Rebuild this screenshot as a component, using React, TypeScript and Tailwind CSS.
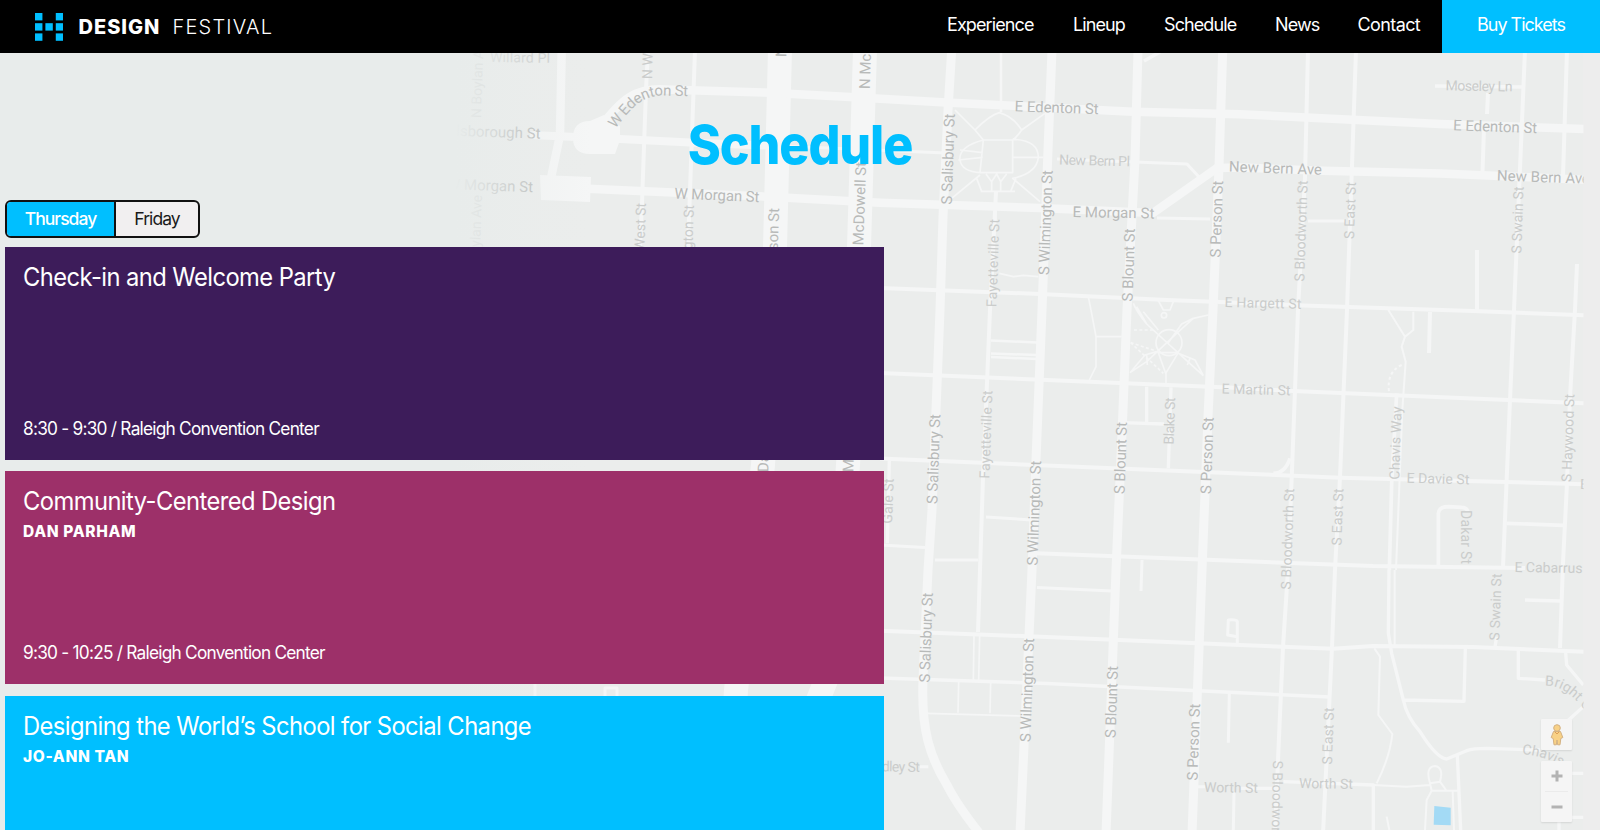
import React from "react";

const ROAD = "#f5f6f6";
const MAJOR = "#b8bab9";
const MINOR = "#cacccb";

type LabelProps = {
  t: string;
  x: number;
  y: number;
  len?: number;
  r?: number;
  minor?: boolean;
  anchor?: "start" | "middle" | "end";
};

function Label({ t, x, y, len, r = -88, minor, anchor = "middle" }: LabelProps) {
  return (
    <text
      transform={`translate(${x} ${y}) rotate(${r})`}
      dy="0.35em"
      textAnchor={anchor}
      textLength={len}
      fontSize={minor ? 14 : 15}
      fill={minor ? MINOR : MAJOR}
    >
      {t}
    </text>
  );
}

const labels: LabelProps[] = [
  { t: "E Edenton St", x: 1056.7, y: 107.5, len: 84, r: 2 },
  { t: "E Edenton St", x: 1495.2, y: 126.5, len: 84, r: 2 },
  { t: "New Bern Ave", x: 1275.5, y: 168, len: 93, r: 2 },
  { t: "New Bern Ave", x: 1543.5, y: 177, len: 93, r: 2 },
  { t: "E Morgan St", x: 1113.5, y: 212.5, len: 82, r: 1 },
  { t: "W Morgan St", x: 717, y: 195, len: 85, r: 2.5 },
  { t: "Hillsborough St", x: 540.5, y: 133.5, r: 2, anchor: "end" },
  { t: "W Morgan St", x: 533, y: 187, r: 2, anchor: "end" },
  { t: "Willard Pl", x: 520, y: 57.5, len: 60, r: 1, minor: true },
  { t: "S Salisbury St", x: 948, y: 159, len: 91 },
  { t: "S Salisbury St", x: 933.5, y: 459, len: 90 },
  { t: "S Salisbury St", x: 926, y: 637.5, len: 90 },
  { t: "S Wilmington St", x: 1045.5, y: 222.5, len: 105 },
  { t: "S Wilmington St", x: 1034, y: 513, len: 105 },
  { t: "S Wilmington St", x: 1027, y: 690, len: 104 },
  { t: "S Blount St", x: 1128.5, y: 265, len: 73 },
  { t: "S Blount St", x: 1120.5, y: 458, len: 72 },
  { t: "S Blount St", x: 1111.5, y: 702, len: 72 },
  { t: "S Person St", x: 1216.5, y: 219, len: 77 },
  { t: "S Person St", x: 1207, y: 455.5, len: 77 },
  { t: "S Person St", x: 1193.5, y: 742, len: 77 },
  { t: "Fayetteville St", x: 993, y: 263, len: 88, minor: true },
  { t: "Fayetteville St", x: 986, y: 434.5, len: 88, minor: true },
  { t: "S Bloodworth St", x: 1301, y: 231, len: 101, minor: true },
  { t: "S Bloodworth St", x: 1287.5, y: 539, len: 101, minor: true },
  { t: "S Bloodworth St", x: 1277, y: 811, len: 101, r: 91, minor: true },
  { t: "S East St", x: 1350, y: 210.5, len: 57, minor: true },
  { t: "S East St", x: 1337.5, y: 517, len: 57, minor: true },
  { t: "S East St", x: 1328, y: 736, len: 57, minor: true },
  { t: "S Swain St", x: 1517.5, y: 220, len: 67, minor: true },
  { t: "S Swain St", x: 1495.5, y: 607, len: 67, minor: true },
  { t: "S Haywood St", x: 1568, y: 438, len: 88, minor: true },
  { t: "Chavis Way", x: 1395.5, y: 443, len: 73, minor: true },
  { t: "Dakar St", x: 1466, y: 537, len: 54, r: 90, minor: true },
  { t: "Gale St", x: 888, y: 501, len: 45, minor: true },
  { t: "Blake St", x: 1169.5, y: 421, len: 47, minor: true },
  { t: "E Hargett St", x: 1263, y: 303, len: 77, r: 1.5, minor: true },
  { t: "E Martin St", x: 1256, y: 389.5, len: 69, r: 1.5, minor: true },
  { t: "E Davie St", x: 1438, y: 478.7, len: 63, r: 1.5, minor: true },
  { t: "E Cabarrus St", x: 1514.5, y: 567, r: 1, minor: true, anchor: "start" },
  { t: "E", x: 1580, y: 484, r: 1, minor: true, anchor: "start" },
  { t: "New Bern Pl", x: 1094.5, y: 160.5, len: 71, r: 1.5, minor: true },
  { t: "Moseley Ln", x: 1479, y: 86, len: 67, r: 1, minor: true },
  { t: "Worth St", x: 1231, y: 787.5, len: 54, r: 1, minor: true },
  { t: "Worth St", x: 1326, y: 783.5, len: 54, r: 1, minor: true },
  { t: "Dudley St", x: 920, y: 767, len: 54, r: 1, minor: true, anchor: "end" },
  { t: "N West St", x: 647, y: 79, minor: true, anchor: "start" },
  { t: "N McDowell St", x: 864.5, y: 89, anchor: "start" },
  { t: "N Dawson St", x: 781, y: 57, anchor: "start" },
  { t: "S West St", x: 641, y: 203, minor: true, anchor: "end" },
  { t: "S Harrington St", x: 689, y: 205, minor: true, anchor: "end" },
  { t: "S Dawson St", x: 774, y: 208, anchor: "end" },
  { t: "S McDowell St", x: 861, y: 162, anchor: "end" },
  { t: "N Boylan Ave", x: 476, y: 118, minor: true, anchor: "start" },
  { t: "N Boylan Ave", x: 477, y: 195, minor: true, anchor: "end" },
  { t: "Dawson St", x: 763, y: 472, anchor: "start" },
  { t: "McDowell St", x: 848, y: 472, anchor: "start" },
];

function MapBackdrop() {
  return (
    <svg
      className="absolute inset-0 h-[830px] w-[1600px]"
      viewBox="0 0 1600 830"
      fontFamily="Roboto, sans-serif"
      aria-hidden="true"
    >
      <defs>
        <linearGradient id="fade" x1="455" x2="590" y1="0" y2="0" gradientUnits="userSpaceOnUse">
          <stop offset="0" stopColor="#e8eceb" />
          <stop offset="0.15" stopColor="#e8eceb" stopOpacity="0.8" />
          <stop offset="0.6" stopColor="#e8eceb" stopOpacity="0.25" />
          <stop offset="1" stopColor="#e8eceb" stopOpacity="0" />
        </linearGradient>
        <clipPath id="tiles">
          <rect x="455" y="50" width="1128.5" height="780" />
        </clipPath>
        <path id="edenton" d="M615 129 C631 109 641 95 665 95.500 L700 96.500" />
        <path id="bright" d="M1545 686 C1560 684 1573 696 1584 709" />
        <path id="chavis" d="M1522 754 C1535 755 1548 758 1564 768" />
      </defs>
      <rect width="1600" height="830" fill="#ebedec" />
      <rect x="1583" width="17" height="830" fill="#ededed" />
      <g clipPath="url(#tiles)" fill="none" stroke={ROAD} strokeLinejoin="round">
        {/* north-south avenues */}
        <g strokeWidth="24">
          <path d="M780 50 L775 247 L763 465 L736 690 L728 830" />
          <path d="M865 50 L859 247 L848 465 L834 660 L812 715" />
        </g>
        <g strokeWidth="9">
          <path d="M951.7 50 L948 110 L943 217 L940 310 L932 510 L928 570 L923 680 C921 730 930 757 947 785 Q957 805 980 834" />
          <path d="M1052 50 L1048 150 L1042 310 L1036 460 L1032 570 L1020 834" />
          <path d="M1138 50 L1135 160 L1127 310 L1122.7 417 L1116 570 L1106 834" />
          <path d="M1222.7 50 L1219 167 L1213 310 L1208 417 L1202 570 L1192 834" />
        </g>
        <g strokeWidth="4">
          <path d="M996 192 L990 310 L987 383 L983 477 L980 570 L978 632" />
          <path d="M1308 50 L1305 177 L1298 310 L1292 470 L1288 570 L1283 647 L1278 760 L1275 834" />
          <path d="M1356 50 L1347 310 L1340 477 L1335 570 L1332 647 L1323 834" />
          <path d="M1525 50 L1514 310 L1510 400 L1503 567" />
          <path d="M1567 50 L1563 176" />
          <path d="M1488 93 L1487 114 M1484 128 L1482.500 172" />
          <path d="M1577 264 L1575 310 L1570 397 L1567 483 L1563 563 L1560 648" />
          <path d="M1477 250 V312 M1430 312 L1429 353" />
          <path d="M648 50 L646 90 L642 203 L640 247 M695 50 L688 247" />
        </g>
        {/* east-west streets */}
        <g strokeWidth="8.500">
          <path d="M561.700 50 L560 135 L551 178" />
          <path d="M530 135 L600 138 L700 143 L780 146" strokeWidth="8" />
          <path d="M600 128 C622 98 636 88 665 89.500 L765 92.500 L850 97 L946 102.600 L1133 111.700 L1240 114.300 L1440 124 L1590 129.300" />
          <path d="M560 187.500 L673 192.500 L773 197 L880 202.700 L1040 208 L1153 213 L1217 168 L1240 167.500 L1323 170.700 L1440 173.500 L1500 176 L1590 180" />
        </g>
        <path d="M573 138 Q573 121 590 121 L604 115 L620 126 V140 L615 154 H590 Q573 154 573 138 Z" fill={ROAD} stroke="none" />
        <path d="M540 175 L591 177 L590 202 L541 200 Z" fill={ROAD} stroke="none" />
        <g strokeWidth="4">
          <path d="M780 146 L946 153" strokeWidth="3" />
          <path d="M880 288 L1040 294 L1167 300 L1220 302 L1303 305.500 L1473 311 L1590 315.500" />
          <path d="M880 373 L1047 380 L1240 388 L1293 391 L1590 403.500" />
          <path d="M880 458.500 L1240 473.500 L1340 477.700 L1590 484.300" />
          <path d="M1030 553 L1240 561 L1373 566 L1525 568" />
          <path d="M880 630.700 L1047 637 L1240 645 L1333 648.700 L1373 646 L1473 647 L1590 652" />
          <path d="M880 678 L1047 683.500 L1240 692.700 L1330 697" strokeWidth="3.500" />
          <path d="M880 545 L925 547.500 M935 560 H978 M986 517 L1032 520 M1037 587.500 L1112 591 M1142 560 L1141 591" strokeWidth="3" />
          <path d="M1057 159 L1187 164 L1199 177 M1157 218 L1210 219 M1308 221 H1345" strokeWidth="3" />
          <path d="M1435 86 L1522 87 M1144 61 L1160 52" strokeWidth="3.500" />
          <path d="M991 340.500 L1037 342.500 M991 353.500 L1037 355 M991 357 L1037 359 M1001 50 V112" strokeWidth="2.500" />
        </g>
        {/* Capitol square */}
        <g transform="translate(880 50) scale(0.33333)" strokeWidth="5">
          <path d="M310 270 H398 V368 H300 Z M310 270 L285 240 L225 180 M285 240 Q330 195 358 188 Q400 200 425 240 L495 190 M398 270 Q410 262 425 240 M310 270 Q235 290 240 330 Q245 365 302 368 M398 268 Q475 270 475 322 Q470 370 398 385 L480 455 M240 300 L308 308 M235 330 L308 322 M398 322 H490 M300 375 L215 445 M302 424 H405 M318 372 L335 395 L350 372 L362 395 L380 372 M335 395 V424 M362 395 V424 M290 385 L305 424 M408 385 L392 424 M348 424 V510 M358 670 L400 680 L430 676 L475 680 M625 740 L633 780 M835 752 L850 780 L870 780 L880 755" />
        </g>
        {/* Moore square */}
        <g transform="translate(880 310) scale(0.33333)" strokeWidth="5">
          <path d="M633 0 L648 80 V170 L628 210 M648 80 H725 M770 -10 L800 42 L940 170 L970 197 M985 15 L940 25 L890 70 L800 155 L750 188 M800 42 Q770 5 760 -20 M835 60 L790 5 M940 25 L905 42 L865 98 M830 125 L795 135 L750 188 M895 130 L945 150 L970 197 M835 128 L857 190 L895 128 Z M800 135 L802 165 M930 145 L922 165 M858 190 V225" />
          <circle cx="867" cy="98" r="39" />
          <circle cx="852" cy="16" r="8" />
          <path d="M762 60 H825 M752 98 L825 122 M752 98 L850 190" strokeDasharray="9 7" />
          <path d="M800 230 V340 M728 338 L852 342 M873 232 L865 475 M28 450 L22 700" strokeWidth="10" />
        </g>
        {/* Chavis Way and Dakar St */}
        <g transform="translate(1240 310) scale(0.33333)" strokeWidth="6">
          <path d="M445 0 L495 80 L520 60 V5 M495 80 L485 110 L497 155 L487 300 L468 780" />
          <path d="M485 165 Q440 185 447 245" strokeDasharray="9 8" />
          <path d="M470 250 L455 520 L448 780 M595 765 V610 Q597 590 625 590 L665 592 Q680 592 684 605 M800 640 L970 646 M100 490 Q135 490 150 445" strokeWidth="11" />
        </g>
        <g transform="translate(880 570) scale(0.33333)" strokeWidth="5">
          <path d="M282 195 L280 330 M299 195 L296 330 M236 335 L234 428 M332 338 L330 430 M140 430 L420 438" />
          <path d="M1048 370 L1045 518 M1062 665 L1060 780 M1072 222 V155 Q1070 148 1045 150 L1043 195 L1072 200 M120 590 H145 M945 650 H975" strokeWidth="9" />
        </g>
        <g transform="translate(1240 570) scale(0.33333)" strokeWidth="10">
          <path d="M447 0 L445 190 L455 250 L490 390 Q500 440 540 485 Q590 565 620 567 L680 542 Q700 535 740 535 L900 540 M652 555 L662 780 M490 390 L672 394 L676 235 M835 240 V325 L915 330 M977 248 L980 285 L1030 345 M1030 410 L980 455 M855 90 L960 93 M765 230 L770 200 M0 655 L110 655 M130 635 L400 645 L400 780 M990 610 H1030 M990 742 H1030 M957 750 V780" />
          <path d="M464 0 V225 M403 235 L420 260 L415 435 L457 492 Q450 560 410 640 M400 645 L500 650 L570 645 M570 640 Q555 590 585 588 Q612 592 600 635 L570 640 L575 662 L560 690 L555 780 M575 662 H655 M600 635 L618 660 M638 665 L642 780 M440 740 L448 780" strokeWidth="6" />
          <path d="M583 708 L632 713 V766 L581 764 Z" fill="#a3daf5" stroke="none" />
        </g>
        <path d="M535 684 V700 M605 700 V688 H617 V700" strokeWidth="3" />
      </g>
      <g clipPath="url(#tiles)">
        {labels.map((l, i) => (
          <Label key={i} {...l} />
        ))}
        <text fontSize="15" fill={MAJOR} textLength="86">
          <textPath href="#edenton">W Edenton St</textPath>
        </text>
        <text fontSize="14" fill={MINOR}>
          <textPath href="#bright">Bright Cir</textPath>
        </text>
        <text fontSize="14" fill={MINOR}>
          <textPath href="#chavis">Chavis</textPath>
        </text>
      </g>
      <rect width="456" height="830" fill="#e8eceb" />
      <rect x="455" width="135" height="830" fill="url(#fade)" />
    </svg>
  );
}

function MapControls() {
  return (
    <div className="absolute top-[719px] left-[1541px] flex w-[31px] flex-col gap-[11px]">
      <button className="flex h-[31px] items-center justify-center rounded-[1px] bg-[#f5f5f5] shadow-[0_1px_2px_rgba(0,0,0,0.1)]">
        <svg className="h-[22px] w-[14px]" viewBox="0 0 14 22">
          <g fill="#f8d186" stroke="#d3b183" strokeWidth="1">
            <path d="M3.500 7.500 H10.500 L12.800 13.500 L10.800 14.500 L10 20.800 H7.600 L7 16 L6.400 20.800 H4 L3.200 14.500 L1.200 13.500 Z" />
            <circle cx="7" cy="4" r="3.300" />
          </g>
          <path d="M5 8 L7 10 L9 8" fill="none" stroke="#dd9d55" strokeWidth="1" />
        </svg>
      </button>
      <div className="flex h-[61px] flex-col rounded-[1px] bg-[#f5f5f5] shadow-[0_1px_2px_rgba(0,0,0,0.1)]">
        <button className="flex flex-1 items-center justify-center">
          <svg className="size-3" viewBox="0 0 12 12">
            <path d="M6 0.500 V11.500 M0.500 6 H11.500" stroke="#b3b3b3" strokeWidth="3" />
          </svg>
        </button>
        <div className="mx-1 h-px bg-[#ebebeb]" />
        <button className="flex flex-1 items-center justify-center">
          <svg className="size-3" viewBox="0 0 12 12">
            <path d="M0.500 6 H11.500" stroke="#b3b3b3" strokeWidth="3" />
          </svg>
        </button>
      </div>
    </div>
  );
}

function Logo() {
  const cells = [
    [0, 0], [21, 0], [0, 10.3], [10.5, 10.3], [21, 10.3], [0, 20.6], [21, 20.6],
  ];
  return (
    <svg className="h-7 w-7" viewBox="0 0 28.300 28.300" fill="#00bfff">
      {cells.map(([x, y]) => (
        <rect key={`${x}-${y}`} x={x} y={y} width="7.500" height="7.500" />
      ))}
    </svg>
  );
}

function Header() {
  return (
    <header className="relative flex h-[53px] justify-between bg-black text-white">
      <div className="flex items-center pt-px pl-[35px]">
        <Logo />
        <div className="flex pl-[15.500px] text-[20px] leading-none">
          <span className="w-[94px] font-extrabold tracking-[1px]">DESIGN</span>
          <span className="font-[350] tracking-[1.200px]">FESTIVAL</span>
        </div>
      </div>
      <nav className="flex text-[18px] leading-[50px] tracking-[-0.900px]">
        <a className="w-[126px]">Experience</a>
        <a className="w-[91px]">Lineup</a>
        <a className="w-[111px]">Schedule</a>
        <a className="w-[82.500px]">News</a>
        <a className="w-[84.500px] tracking-[-0.600px]">Contact</a>
        <a className="w-[158px] bg-[#00bfff] text-center tracking-[-1px]">Buy Tickets</a>
      </nav>
    </header>
  );
}

type SessionProps = { title: string; speaker?: string; time?: string; color: string };

function Session({ title, speaker, time, color }: SessionProps) {
  return (
    <article className={`flex h-[213.400px] w-[879px] shrink-0 flex-col pt-[14px] pr-4 pb-[19px] pl-[18px] text-white ${color}`}>
      <h2 className="origin-left scale-x-[0.95] text-[25px] leading-[32px] font-normal tracking-[-0.600px]">{title}</h2>
      {speaker && (
        <p className="mt-[5px] text-[15.500px] leading-[20px] font-extrabold tracking-[0.650px]">{speaker}</p>
      )}
      {time && <p className="mt-auto origin-left scale-x-[0.96] text-[18px] leading-6 tracking-[-0.800px]">{time}</p>}
    </article>
  );
}

export default function App() {
  return (
    <div className="relative h-[830px] w-[1600px] overflow-hidden bg-[#e8eceb] font-['Inter',sans-serif]">
      <MapBackdrop />
      <Header />
      <main className="relative">
        <h1 className="flex h-[147px] scale-x-[0.93] items-center justify-center pt-9 text-[54px] leading-none font-extrabold tracking-[-1.200px] text-[#00bfff]">
          Schedule
        </h1>
        <div className="ml-[5px] flex h-[38px] w-[195px] overflow-hidden rounded-md border-2 border-[#111] bg-[#f1eff0] text-[17.500px] leading-[31px] tracking-[-0.950px] text-[#1a1a1a]">
          <button className="w-[109px] border-r-2 border-[#111] bg-[#00bfff] pb-[2px] font-medium text-white">Thursday</button>
          <button className="flex-1 pb-[2px]">Friday</button>
        </div>
        <section className="mt-[8.600px] ml-[5px] flex flex-col gap-[11.100px]">
          <Session title="Check-in and Welcome Party" time="8:30 - 9:30 / Raleigh Convention Center" color="bg-[#3d1c5a]" />
          <Session title="Community-Centered Design" speaker="DAN PARHAM" time="9:30 - 10:25 / Raleigh Convention Center" color="bg-[#9d3069]" />
          <Session title="Designing the World’s School for Social Change" speaker="JO-ANN TAN" color="bg-[#00bfff]" />
        </section>
      </main>
      <MapControls />
    </div>
  );
}
